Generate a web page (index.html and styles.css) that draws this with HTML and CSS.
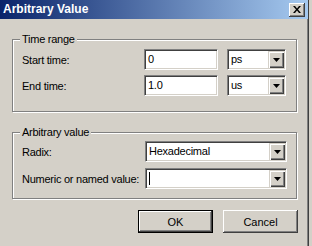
FILE: index.html
```html
<!DOCTYPE html>
<html>
<head>
<meta charset="utf-8">
<link rel="stylesheet" href="styles.css">
</head>
<body>
<div class="window">
  <div class="titlebar">
    <span class="title">Arbitrary Value</span>
    <div class="close"><svg width="8" height="7" viewBox="0 0 8 7"><path d="M0 0h2l2 2.5L6 0h2L5 3.5 8 7H6L4 4.5 2 7H0l3-3.5z" fill="#000"/></svg></div>
  </div>
  <div class="content">
    <div class="group g1">
      <div class="legend">Time range</div>
      <div class="rows rows1">
        <span class="label">Start time:</span>
        <div class="field">0</div>
        <div class="combo"><span class="ctext">ps</span><span class="drop"><svg width="7" height="4" viewBox="0 0 7 4"><path d="M0 0h7L3.5 4z" fill="#000"/></svg></span></div>
        <span class="label">End time:</span>
        <div class="field">1.0</div>
        <div class="combo"><span class="ctext">us</span><span class="drop"><svg width="7" height="4" viewBox="0 0 7 4"><path d="M0 0h7L3.5 4z" fill="#000"/></svg></span></div>
      </div>
    </div>
    <div class="group g2">
      <div class="legend">Arbitrary value</div>
      <div class="rows rows2">
        <span class="label">Radix:</span>
        <div class="combo"><span class="ctext">Hexadecimal</span><span class="drop"><svg width="7" height="4" viewBox="0 0 7 4"><path d="M0 0h7L3.5 4z" fill="#000"/></svg></span></div>
        <span class="label">Numeric or named value:</span>
        <div class="combo"><span class="ctext"><span class="caret"></span></span><span class="drop"><svg width="7" height="4" viewBox="0 0 7 4"><path d="M0 0h7L3.5 4z" fill="#000"/></svg></span></div>
      </div>
    </div>
    <div class="buttons">
      <div class="btn default">OK</div>
      <div class="btn">Cancel</div>
    </div>
  </div>
</div>
</body>
</html>
```
FILE: styles.css
```css
html, body {
  margin: 0;
  padding: 0;
  background: #d4d0c8;
}
body {
  font-family: "Liberation Sans", Arial, sans-serif;
  font-size: 11px;
  color: #000;
  letter-spacing: -0.25px;
}
.window {
  width: 309px;
  height: 246px;
  box-sizing: border-box;
  border-right: 1px solid #404040;
  box-shadow: inset -1px 0 0 #808080;
}
.titlebar {
  height: 19px;
  width: 308px;
  background: linear-gradient(to right, #0a246a, #a6caf0);
  display: flex;
  align-items: center;
  justify-content: space-between;
  padding: 0 3px 0 3px;
  box-sizing: border-box;
}
.title {
  color: #fff;
  font-weight: bold;
  font-size: 12px;
  letter-spacing: 0;
  line-height: 19px;
}
.close {
  width: 16px;
  height: 14px;
  margin-top: 1px;
  background: #d4d0c8;
  box-sizing: border-box;
  box-shadow: inset -1px -1px #404040, inset 1px 1px #fff, inset -2px -2px #808080;
  display: flex;
  align-items: center;
  justify-content: center;
  padding-bottom: 1px;
}
.content {
  padding: 20px 0 0 12px;
}
.group {
  width: 285px;
  box-sizing: border-box;
  border: 1px solid #808080;
  box-shadow: inset 1px 1px #fff, 1px 1px #fff;
  padding: 0 9px;
}
.g1 { height: 73px; }
.g2 { height: 67px; margin-top: 20px; }
.legend {
  width: fit-content;
  margin: -7px 0 0 -2px;
  padding: 0 2px;
  line-height: 13px;
  background: #d4d0c8;
}
.label {
  white-space: nowrap;
}
.rows {
  display: grid;
  column-gap: 9px;
  row-gap: 5px;
  grid-auto-rows: 21px;
  align-items: center;
}
.rows1 {
  grid-template-columns: 113px 74px 59px;
  margin-top: 3px;
}
.rows2 {
  grid-template-columns: 114px 142px;
  margin-top: 2px;
  row-gap: 6px;
}
.field, .combo {
  height: 21px;
  box-sizing: border-box;
  background: #fff;
  border: 1px solid;
  border-color: #808080 #fff #fff #808080;
  box-shadow: inset 1px 1px #404040, inset -1px -1px #d4d0c8;
  line-height: 19px;
}
.field {
  padding-left: 3px;
}
.combo {
  display: flex;
  padding: 1px;
}
.ctext {
  flex: 1;
  padding-left: 2px;
  line-height: 17px;
  display: flex;
  align-items: center;
}
.drop {
  width: 16px;
  height: 17px;
  box-sizing: border-box;
  background: #d4d0c8;
  box-shadow: inset 1px 1px #d4d0c8, inset 2px 2px #fff, inset -1px -1px #404040, inset -2px -2px #808080;
  display: flex;
  align-items: center;
  justify-content: center;
}
.drop svg { display: block; }
.caret {
  display: block;
  width: 1px;
  height: 13px;
  background: #000;
}
.buttons {
  display: flex;
  gap: 10px;
  margin-top: 11px;
  padding-left: 126px;
}
.btn {
  width: 75px;
  height: 23px;
  box-sizing: border-box;
  background: #d4d0c8;
  box-shadow: inset -1px -1px #404040, inset 1px 1px #fff, inset -2px -2px #808080;
  display: flex;
  align-items: center;
  justify-content: center;
  letter-spacing: 0;
}
.btn.default {
  border: 1px solid #000;
}
```
